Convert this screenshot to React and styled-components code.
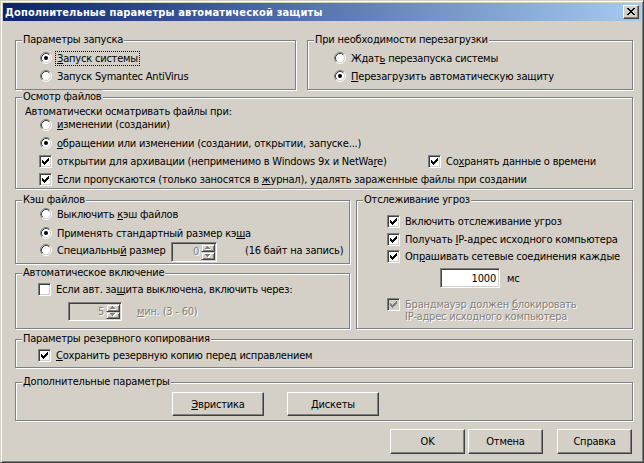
import React from "react";
import styled, { createGlobalStyle } from "styled-components";

const FONT = `"DejaVu Sans Condensed", "Liberation Sans", sans-serif`;

const GlobalStyle = createGlobalStyle`
  html, body { margin: 0; padding: 0; background: #d4d0c8; }
  body { width: 644px; height: 463px; overflow: hidden; }
  *, *::before, *::after { box-sizing: border-box; }
`;

const Window = styled.div`
  width: 644px;
  height: 463px;
  display: flex;
  flex-direction: column;
  background: #d4d0c8;
  border: 1px solid;
  border-color: #d4d0c8 #404040 #404040 #d4d0c8;
  box-shadow: inset 1px 1px #ffffff, inset -1px -1px #808080;
  padding: 2px;
  font-family: ${FONT};
  font-size: 11px;
  line-height: 13px;
  letter-spacing: -0.2px;
  color: #000;
`;

const TitleBar = styled.div`
  flex: none;
  height: 18px;
  display: flex;
  align-items: center;
  justify-content: space-between;
  padding: 0 2px;
  background: linear-gradient(to right, #0a246a, #a6caf0);
`;

const TitleText = styled.div`
  color: #fff;
  font-weight: bold;
  letter-spacing: 0.15px;
  white-space: nowrap;
`;

const CloseButton = styled.div`
  width: 16px;
  height: 14px;
  padding: 2px 0 0 3px;
  background: #d4d0c8;
  border: 1px solid;
  border-color: #fff #404040 #404040 #fff;
  box-shadow: inset -1px -1px #808080, inset 1px 1px #d4d0c8;
  svg { display: block; }
`;

const Client = styled.div`
  flex: 1;
  display: flex;
  flex-direction: column;
  padding: 0 8px 0 12px;
`;

const Band = styled.div`
  display: flex;
  align-items: flex-start;
  gap: ${(p) => p.$gap ?? 0}px;
  margin-top: ${(p) => p.$mt}px;
`;

const Stack = styled.div`
  flex: 0 0 ${(p) => p.$w}px;
  display: flex;
  flex-direction: column;
  gap: ${(p) => p.$gap}px;
`;

const Group = styled.div`
  position: relative;
  flex: ${(p) => (p.$w ? `0 0 ${p.$w}px` : "none")};
  height: ${(p) => p.$h}px;
  padding: ${(p) => p.$pad};
  border: 1px solid #808080;
  box-shadow: inset 1px 1px #fff, 1px 1px #fff;
  display: flex;
  flex-direction: column;
  align-items: flex-start;
`;

const Legend = styled.div`
  position: absolute;
  top: -8px;
  left: 6px;
  padding: 0 1px;
  background: #d4d0c8;
  white-space: nowrap;
`;

const Line = styled.div`
  display: flex;
  align-items: ${(p) => (p.$top ? "flex-start" : "center")};
  height: ${(p) => p.$h ?? 16}px;
  margin-top: ${(p) => p.$mt ?? 0}px;
  margin-left: ${(p) => p.$ml ?? 0}px;
  white-space: nowrap;
`;

const Option = styled.div`
  display: flex;
  align-items: ${(p) => (p.$top ? "flex-start" : "center")};
  flex: ${(p) => (p.$w ? `0 0 ${p.$w}px` : "none")};
`;

const Caption = styled.span`
  border: 1px ${(p) => (p.$focus ? "dotted #000" : "solid transparent")};
  padding: 0 1px;
  line-height: ${(p) => p.$lh ?? 13}px;
  color: ${(p) => (p.$disabled ? "#808080" : "#000")};
  text-shadow: ${(p) => (p.$disabled ? "1px 1px #fff" : "none")};
`;

const Text = styled.span`
  margin-left: ${(p) => p.$ml ?? 0}px;
  color: ${(p) => (p.$disabled ? "#808080" : "#000")};
  text-shadow: ${(p) => (p.$disabled ? "1px 1px #fff" : "none")};
`;

const U = styled.span`
  text-decoration: underline;
  text-underline-offset: 1px;
`;

const CheckBox = styled.span`
  position: relative;
  display: block;
  flex: none;
  width: 13px;
  height: 13px;
  margin-right: 3px;
  border: 1px solid;
  border-color: #808080 #fff #fff #808080;
  box-shadow: inset 1px 1px #404040, inset -1px -1px #d4d0c8;
  background: ${(p) => (p.$disabled ? "#d4d0c8" : "#fff")};
`;

const CheckMark = styled.svg`
  position: absolute;
  left: 2px;
  top: 2px;
  display: block;
`;

const RadioCell = styled.span`
  display: block;
  flex: none;
  width: 13px;
  height: 12px;
  margin-right: 3px;
  padding-left: 1px;
  svg { display: block; }
`;

function Check({ checked, disabled }) {
  return (
    <CheckBox $disabled={disabled}>
      {checked && (
        <CheckMark width="7" height="7" viewBox="0 0 7 7" shapeRendering="crispEdges">
          <path
            fill={disabled ? "#808080" : "#000"}
            d="M0 2h1v3H0z M1 3h1v3H1z M2 4h1v3H2z M3 3h1v3H3z M4 2h1v3H4z M5 1h1v3H5z M6 0h1v3H6z"
          />
        </CheckMark>
      )}
    </CheckBox>
  );
}

function Radio({ checked }) {
  return (
    <RadioCell>
      <svg width="12" height="12" viewBox="0 0 12 12">
        <circle cx="6" cy="6" r="4.6" fill="#fff" />
        <path d="M2.11 9.89A5.5 5.5 0 0 1 9.89 2.11" stroke="#808080" fill="none" />
        <path d="M9.89 2.11A5.5 5.5 0 0 1 2.11 9.89" stroke="#fff" fill="none" />
        <path d="M2.82 9.18A4.5 4.5 0 0 1 9.18 2.82" stroke="#404040" fill="none" />
        <path d="M9.18 2.82A4.5 4.5 0 0 1 2.82 9.18" stroke="#d4d0c8" fill="none" />
        {checked && <circle cx="6" cy="6" r="2" fill="#000" />}
      </svg>
    </RadioCell>
  );
}

const Spin = styled.div`
  flex: none;
  display: flex;
  width: ${(p) => p.$w}px;
  height: ${(p) => p.$h}px;
  margin-left: ${(p) => p.$ml ?? 0}px;
  margin-top: ${(p) => p.$mt ?? 0}px;
  padding: 1px;
  border: 1px solid;
  border-color: #808080 #fff #fff #808080;
  box-shadow: inset 1px 1px #404040, inset -1px -1px #d4d0c8;
  background: #d4d0c8;
`;

const SpinValue = styled.div`
  flex: 1;
  display: flex;
  align-items: center;
  justify-content: flex-end;
  padding-right: 2px;
  color: #808080;
  text-shadow: 1px 1px #fff;
`;

const SpinArrows = styled.div`
  flex: 0 0 ${(p) => p.$w}px;
  display: flex;
  flex-direction: column;
`;

const ArrowBtn = styled.div`
  flex: 1;
  display: flex;
  align-items: center;
  justify-content: center;
  background: #d4d0c8;
  border: 1px solid;
  border-color: #d4d0c8 #404040 #404040 #d4d0c8;
  box-shadow: inset 1px 1px #fff, inset -1px -1px #808080;
  svg { display: block; }
`;

function Arrow({ down }) {
  const d = down ? "M0 0h5v1H0z M1 1h3v1H1z M2 2h1v1H2z" : "M2 0h1v1H2z M1 1h3v1H1z M0 2h5v1H0z";
  return (
    <svg width="6" height="4" viewBox="0 0 6 4" shapeRendering="crispEdges">
      <path d={d} fill="#fff" transform="translate(1 1)" />
      <path d={d} fill="#808080" />
    </svg>
  );
}

function Spinner({ value, w, h, arrowW, ml, mt }) {
  return (
    <Spin $w={w} $h={h} $ml={ml} $mt={mt}>
      <SpinValue>{value}</SpinValue>
      <SpinArrows $w={arrowW}>
        <ArrowBtn>
          <Arrow />
        </ArrowBtn>
        <ArrowBtn>
          <Arrow down />
        </ArrowBtn>
      </SpinArrows>
    </Spin>
  );
}

const TextField = styled.div`
  flex: none;
  width: ${(p) => p.$w}px;
  height: ${(p) => p.$h}px;
  margin-left: ${(p) => p.$ml ?? 0}px;
  display: flex;
  align-items: center;
  justify-content: flex-end;
  padding-right: 3px;
  border: 1px solid;
  border-color: #808080 #fff #fff #808080;
  box-shadow: inset 1px 1px #404040, inset -1px -1px #d4d0c8;
  background: #fff;
`;

const PushButton = styled.button`
  flex: none;
  width: ${(p) => p.$w}px;
  height: ${(p) => p.$h}px;
  margin-left: ${(p) => p.$ml ?? 0}px;
  padding: 0;
  font: inherit;
  letter-spacing: inherit;
  line-height: 13px;
  color: #000;
  background: #d4d0c8;
  border: 1px solid;
  border-color: #fff #404040 #404040 #fff;
  box-shadow: inset -1px -1px #808080, inset 1px 1px #d4d0c8;
`;

const ButtonBar = styled.div`
  display: flex;
  justify-content: flex-end;
  margin-top: 8px;
  padding-right: 1px;
`;

export default function App() {
  return (
    <>
      <GlobalStyle />
      <Window>
        <TitleBar>
          <TitleText>Дополнительные параметры автоматической защиты</TitleText>
          <CloseButton>
            <svg width="8" height="7" viewBox="0 0 8 7" shapeRendering="crispEdges">
              <path
                fill="#000"
                d="M0 0h2v1H0z M6 0h2v1H6z M1 1h2v1H1z M5 1h2v1H5z M2 2h4v1H2z M3 3h2v1H3z M2 4h4v1H2z M1 5h2v1H1z M5 5h2v1H5z M0 6h2v1H0z M6 6h2v1H6z"
              />
            </svg>
          </CloseButton>
        </TitleBar>

        <Client>
          <Band $mt={19} $gap={11}>
            <Group $w={281} $h={50} $pad="8px 0 0 23px">
              <Legend>Параметры запуска</Legend>
              <Line $h={18}>
                <Radio checked />
                <Caption $focus>
                  <U>З</U>апуск системы
                </Caption>
              </Line>
              <Line $h={18}>
                <Radio />
                <Caption>Запуск Symantec AntiVirus</Caption>
              </Line>
            </Group>
            <Group $w={326} $h={50} $pad="8px 0 0 25px">
              <Legend>При необходимости перезагрузки</Legend>
              <Line $h={18}>
                <Radio />
                <Caption>
                  Ждат<U>ь</U> перезапуска системы
                </Caption>
              </Line>
              <Line $h={18}>
                <Radio checked />
                <Caption>
                  <U>П</U>ерезагрузить автоматическую защиту
                </Caption>
              </Line>
            </Group>
          </Band>

          <Band $mt={7}>
            <Group $w={618} $h={92} $pad="7px 0 0 9px">
              <Legend>Осмотр файлов</Legend>
              <Line $h={13}>
                <Text>Автоматически осматривать файлы при:</Text>
              </Line>
              <Line $h={13} $ml={14}>
                <Radio />
                <Caption>
                  <U>и</U>зменении (создании)
                </Caption>
              </Line>
              <Line $h={18} $mt={3} $ml={14}>
                <Radio checked />
                <Caption>
                  <U>о</U>бращении или изменении (создании, открытии, запуске...)
                </Caption>
              </Line>
              <Line $h={18} $ml={14}>
                <Option $w={389}>
                  <Check checked />
                  <Caption>
                    открытии для архивации (неприменимо в Windows 9x и NetWa<U>r</U>e)
                  </Caption>
                </Option>
                <Option>
                  <Check checked />
                  <Caption>
                    Со<U>х</U>ранять данные о времени
                  </Caption>
                </Option>
              </Line>
              <Line $h={18} $ml={14}>
                <Check checked />
                <Caption>
                  Если пропускаются (только заносятся в <U>ж</U>урнал), удалять зараженные файлы при создании
                </Caption>
              </Line>
            </Group>
          </Band>

          <Band $mt={11} $gap={6}>
            <Stack $w={335} $gap={9}>
              <Group $h={64} $pad="5px 0 0 23px">
                <Legend>Кэш файлов</Legend>
                <Line>
                  <Radio />
                  <Caption>
                    Выключить <U>к</U>эш файлов
                  </Caption>
                </Line>
                <Line $mt={3}>
                  <Radio checked />
                  <Caption>
                    Применять стандартный размер кэ<U>ш</U>а
                  </Caption>
                </Line>
                <Line $mt={1}>
                  <Option $w={132}>
                    <Radio />
                    <Caption>
                      Специальны<U>й</U> размер
                    </Caption>
                  </Option>
                  <Spinner value="0" w={46} h={20} arrowW={14} mt={3} />
                  <Text $ml={28}>(16 байт на запись)</Text>
                </Line>
              </Group>
              <Group $h={56} $pad="7px 0 0 22px">
                <Legend>Автоматическое включение</Legend>
                <Line>
                  <Check />
                  <Caption>
                    Если авт. за<U>щ</U>ита выключена, включить через:
                  </Caption>
                </Line>
                <Line $h={19} $mt={5}>
                  <Spinner value="5" w={54} h={19} arrowW={14} ml={30} />
                  <Text $ml={15} $disabled>
                    <U>м</U>ин. (3 - 60)
                  </Text>
                </Line>
              </Group>
            </Stack>

            <Group $w={277} $h={129} $pad="12px 0 0 30px">
              <Legend>Отслеживание угроз</Legend>
              <Line>
                <Check checked />
                <Caption>Включить отслеживание угроз</Caption>
              </Line>
              <Line $mt={2}>
                <Check checked />
                <Caption>
                  Получать <U>I</U>P-адрес исходного компьютера
                </Caption>
              </Line>
              <Line $mt={1}>
                <Check checked />
                <Caption>
                  Оп<U>р</U>ашивать сетевые соединения каждые
                </Caption>
              </Line>
              <Line $h={20} $mt={4}>
                <TextField $w={60} $h={20} $ml={53}>
                  1000
                </TextField>
                <Text $ml={7}>мс</Text>
              </Line>
              <Line $h={26} $mt={10} $top>
                <Option $top>
                  <Check checked disabled />
                  <Caption $disabled $lh={12}>
                    Брандмауэр должен <U>б</U>локировать
                    <br />
                    IP-адрес исходного компьютера
                  </Caption>
                </Option>
              </Line>
            </Group>
          </Band>

          <Band $mt={10}>
            <Group $w={618} $h={29} $pad="7px 0 0 22px">
              <Legend>Параметры резервного копирования</Legend>
              <Line>
                <Check checked />
                <Caption>
                  <U>С</U>охранить резервную копию перед исправлением
                </Caption>
              </Line>
            </Group>
          </Band>

          <Band $mt={14}>
            <Group $w={618} $h={39} $pad="9px 0 0 156px">
              <Legend>Дополнительные параметры</Legend>
              <Line $h={24}>
                <PushButton $w={92} $h={24}>
                  <U>Э</U>вристика
                </PushButton>
                <PushButton $w={92} $h={24} $ml={23}>
                  <U>Д</U>искеты
                </PushButton>
              </Line>
            </Group>
          </Band>

          <ButtonBar>
            <PushButton $w={75} $h={25}>OK</PushButton>
            <PushButton $w={75} $h={25} $ml={3}>Отмена</PushButton>
            <PushButton $w={75} $h={25} $ml={14}>Справка</PushButton>
          </ButtonBar>
        </Client>
      </Window>
    </>
  );
}
